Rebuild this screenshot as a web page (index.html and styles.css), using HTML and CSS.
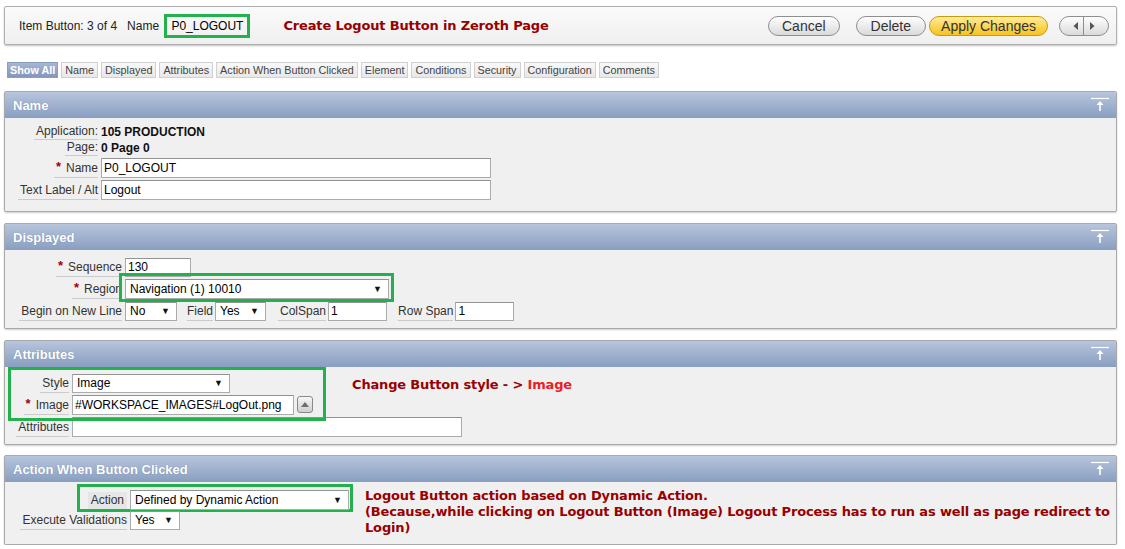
FILE: index.html
```html
<!DOCTYPE html>
<html>
<head>
<meta charset="utf-8">
<link rel="stylesheet" href="styles.css">
</head>
<body>
<div class="page">
  <div class="topbar">
    <div class="crumb">Item Button: 3 of 4 &nbsp; Name <span class="hl-name">P0_LOGOUT</span></div>
    <div class="note title-note">Create Logout Button in Zeroth Page</div>
    <div class="actions">
      <button class="pill p-cancel">Cancel</button>
      <button class="pill p-delete">Delete</button>
      <button class="pill hot">Apply Changes</button>
      <div class="pager">
        <span class="pg"><svg width="8" height="10" viewBox="0 0 8 10"><path d="M6 1L1.5 5L6 9Z" fill="#555"/></svg></span>
        <span class="pg"><svg width="8" height="10" viewBox="0 0 8 10"><path d="M2 1L6.5 5L2 9Z" fill="#555"/></svg></span>
      </div>
    </div>
  </div>

  <div class="tabs">
    <span class="tab on">Show All</span>
    <span class="tab">Name</span>
    <span class="tab">Displayed</span>
    <span class="tab">Attributes</span>
    <span class="tab">Action When Button Clicked</span>
    <span class="tab">Element</span>
    <span class="tab">Conditions</span>
    <span class="tab">Security</span>
    <span class="tab">Configuration</span>
    <span class="tab">Comments</span>
  </div>

  <section class="region r-name">
    <div class="rhead"><h2>Name</h2><svg class="up" width="18" height="14" viewBox="0 0 18 14"><path d="M0 1.5H18" stroke="#fff" stroke-width="1.2"/><path d="M9 6V14" stroke="#fff" stroke-width="1.6"/><path d="M5.5 8L9 4L12.5 8Z" fill="#fff"/></svg></div>
    <div class="rbody">
      <div class="form">
        <div class="row text"><div class="lab"><span>Application:</span></div><b class="val">105 PRODUCTION</b></div>
        <div class="row text"><div class="lab"><span>Page:</span></div><b class="val">0 Page 0</b></div>
        <div class="row"><div class="lab"><span><i class="req">*</i>Name</span></div><div class="inp w-name">P0_LOGOUT</div></div>
        <div class="row"><div class="lab"><span>Text Label / Alt</span></div><div class="inp w-name">Logout</div></div>
      </div>
    </div>
  </section>

  <section class="region r-disp">
    <div class="rhead"><h2>Displayed</h2><svg class="up" width="18" height="14" viewBox="0 0 18 14"><path d="M0 1.5H18" stroke="#fff" stroke-width="1.2"/><path d="M9 6V14" stroke="#fff" stroke-width="1.6"/><path d="M5.5 8L9 4L12.5 8Z" fill="#fff"/></svg></div>
    <div class="rbody">
      <div class="form">
        <div class="row"><div class="lab"><span><i class="req">*</i>Sequence</span></div><div class="inp w-seq">130</div></div>
        <div class="row"><div class="lab"><span><i class="req">*</i>Region</span></div><div class="hl-box hl-region"><div class="inp sel w-region">Navigation (1) 10010</div></div></div>
        <div class="row">
          <div class="lab"><span>Begin on New Line</span></div><div class="inp sel w-no">No</div>
          <span class="ilab l-field">Field</span><div class="inp sel w-yes">Yes</div>
          <span class="ilab l-col">ColSpan</span><div class="inp w-col">1</div>
          <span class="ilab l-row">Row Span</span><div class="inp w-col">1</div>
        </div>
      </div>
    </div>
  </section>

  <section class="region r-attr">
    <div class="rhead"><h2>Attributes</h2><svg class="up" width="18" height="14" viewBox="0 0 18 14"><path d="M0 1.5H18" stroke="#fff" stroke-width="1.2"/><path d="M9 6V14" stroke="#fff" stroke-width="1.6"/><path d="M5.5 8L9 4L12.5 8Z" fill="#fff"/></svg></div>
    <div class="rbody col">
      <div class="attr-top">
        <div class="form hl-box hl-attr">
          <div class="row"><div class="lab"><span>Style</span></div><div class="inp sel w-style">Image</div></div>
          <div class="row"><div class="lab"><span><i class="req">*</i>Image</span></div><div class="inp w-img">#WORKSPACE_IMAGES#LogOut.png</div><span class="pick"><svg width="10" height="7" viewBox="0 0 10 7"><path d="M1 6L5 1L9 6Z" fill="#6e6e6e"/></svg></span></div>
        </div>
        <div class="note attr-note">Change Button style - &gt; <span class="bright">Image</span></div>
      </div>
      <div class="form">
        <div class="row"><div class="lab"><span>Attributes</span></div><div class="inp w-attr"></div></div>
      </div>
    </div>
  </section>

  <section class="region r-act">
    <div class="rhead"><h2>Action When Button Clicked</h2><svg class="up" width="18" height="14" viewBox="0 0 18 14"><path d="M0 1.5H18" stroke="#fff" stroke-width="1.2"/><path d="M9 6V14" stroke="#fff" stroke-width="1.6"/><path d="M5.5 8L9 4L12.5 8Z" fill="#fff"/></svg></div>
    <div class="rbody">
      <div class="form">
        <div class="row hl-box hl-act"><div class="lab"><span class="boxed">Action</span></div><div class="inp sel w-act">Defined by Dynamic Action</div></div>
        <div class="row short"><div class="lab"><span>Execute Validations</span></div><div class="inp sel w-yes2">Yes</div></div>
      </div>
      <div class="note act-note">Logout Button action based on Dynamic Action.<br>(Because,while clicking on Logout Button (Image) Logout Process has to run as well as page redirect to<br>Login)</div>
    </div>
  </section>
</div>
</body>
</html>
```
FILE: styles.css
```css
* { box-sizing: border-box; }
body {
  margin: 0;
  background: #fff;
  font-family: "Liberation Sans", Arial, sans-serif;
  font-size: 12px;
  color: #222;
}
.page { padding: 6px 8px 0 4px; }

/* top bar */
.topbar {
  height: 39px;
  border: 1px solid #b0b0b0;
  border-radius: 2px;
  background: linear-gradient(#fbfbfb, #efefef);
  box-shadow: 0 1px 2px rgba(0,0,0,.25);
  display: flex;
  align-items: center;
  padding: 0 7px 0 14px;
}
.crumb { display: flex; align-items: center; white-space: pre; color: #222; }
.hl-name {
  border: 3px solid #22b14c;
  padding: 2px 4px;
  line-height: 14px;
  font-size: 12px;
  color: #000;
  margin-left: 2px;
}
.note {
  font-family: "DejaVu Sans", Verdana, sans-serif;
  font-weight: bold;
  font-size: 13px;
  letter-spacing: -0.16px;
  color: #990000;
  white-space: nowrap;
}
.title-note { margin-left: 33px; }
.actions { margin-left: auto; display: flex; align-items: center; }
.pill {
  height: 20px;
  border: 1px solid #8e8e8e;
  border-radius: 10px;
  background: linear-gradient(#fefefe, #dadada);
  font-family: "Liberation Sans", Arial, sans-serif;
  font-size: 14px;
  color: #333;
  padding: 0 13px;
  line-height: 18px;
}
.p-cancel { margin-right: 16px; padding: 0 13px 0 13px; }
.p-delete { margin-right: 3px; padding: 0 14px; }
.pill.hot {
  background: linear-gradient(#ffec9a, #f9c21e);
  border-color: #c79a10;
  padding: 0 11px;
  margin-right: 11px;
}
.pager {
  display: flex;
  height: 20px;
  border: 1px solid #8e8e8e;
  border-radius: 10px;
  background: linear-gradient(#fefefe, #dadada);
  overflow: hidden;
}
.pg { width: 24px; display: flex; align-items: center; justify-content: center; }
.pg:first-child { border-right: 1px solid #8e8e8e; justify-content: flex-end; padding-right: 3px; }
.pg:last-child { justify-content: flex-start; padding-left: 4px; }

/* tabs */
.tabs { display: flex; gap: 3px; margin: 17px 0 0 3px; }
.tab {
  height: 16px;
  line-height: 14px;
  padding: 0 3px;
  border: 1px solid #d0d0d0;
  background: linear-gradient(#f9f9f9, #e8e8e8);
  font-size: 10.8px;
  color: #444;
  white-space: nowrap;
}
.tab.on {
  background: linear-gradient(#a6b7d4, #8497bb);
  border-color: #8b9dc0;
  color: #fff;
  font-weight: bold;
  padding: 0 2px;
}

/* regions */
.region {
  margin-top: 11px;
  border: 1px solid #a9a9a9;
  border-radius: 2px;
  background: #f0f0f0;
  box-shadow: 0 1px 2px rgba(0,0,0,.2);
}
.r-name { margin-top: 13px; }
.r-act { margin-top: 10px; }
.rhead {
  height: 26px;
  background: linear-gradient(#b7c5dd, #899ec0);
  display: flex;
  align-items: center;
  justify-content: space-between;
  padding: 0 7px 0 8px;
}
.rhead h2 {
  margin: 0;
  font-size: 13px;
  font-weight: bold;
  color: #fff;
  text-shadow: 0 0 1px rgba(60,80,120,.5);
}
.up { margin-top: -2px; }
.rbody { display: flex; }
.rbody.col { flex-direction: column; }
.form { display: flex; flex-direction: column; }

.r-name .rbody { padding: 6px 0 11px; }
.r-disp .rbody { padding: 5px 0 7px; }
.r-attr .rbody { padding: 4px 0 7px; }
.r-act .rbody { padding: 6px 0 8px; }

.row { display: flex; align-items: flex-end; height: 22px; }
.row.text { height: 16px; }
.row.short { height: 20px; }
.lab { flex: none; text-align: right; margin-right: 3px; }
.lab span {
  display: inline-block;
  line-height: 17px;
  border-bottom: 1px solid #cbcbcb;
  color: #333;
  padding-left: 2px;
}
.row.text .lab span { line-height: 15px; }
.r-name .lab { width: 93px; }
.r-disp .lab { width: 117px; }
.r-attr .lab { width: 64px; }
.r-act .lab { width: 122px; }
.lab span.boxed { background: #e6e6e6; padding: 0 3px; }

.val { line-height: 15px; color: #111; }
.req {
  font-style: normal;
  font-weight: bold;
  color: #a10000;
  font-size: 13px;
  margin-right: 5px;
  vertical-align: 1px;
}

.inp {
  height: 20px;
  border: 1px solid #ababab;
  border-top-color: #929292;
  background: #fff;
  font-size: 12px;
  line-height: 18px;
  padding: 0 2px;
  color: #000;
  white-space: nowrap;
}
.sel { position: relative; padding-left: 4px; }
.sel::after {
  content: "\25BC";
  position: absolute;
  right: 6px;
  top: 0;
  font-size: 9px;
  color: #111;
}
.w-name { width: 390px; }
.w-seq { width: 66px; height: 19px; line-height: 17px; }
.w-region { width: 264px; }
.w-no { width: 52px; height: 19px; line-height: 17px; }
.w-yes { width: 51px; height: 19px; line-height: 17px; }
.w-col { width: 59px; height: 19px; line-height: 17px; }
.w-style { width: 158px; height: 19px; line-height: 17px; }
.w-img { width: 222px; }
.w-attr { width: 390px; }
.w-act { width: 219px; }
.w-yes2 { width: 50px; height: 19px; line-height: 17px; }

.ilab {
  line-height: 17px;
  border-bottom: 1px solid #cbcbcb;
  color: #333;
  margin-right: 2px;
}
.l-field { margin-left: 10px; }
.l-col { margin-left: 12px; padding-left: 2px; }
.l-row { margin-left: 11px; }

.pick {
  width: 16px;
  height: 17px;
  margin: 0 0 2px 3px;
  border: 1px solid #8a8a8a;
  border-radius: 3px;
  background: linear-gradient(#f6f6f6, #cfcfcf);
  display: flex;
  align-items: center;
  justify-content: center;
}

/* annotation highlight boxes */
.hl-box { position: relative; }
.hl-box::before {
  content: "";
  position: absolute;
  border: 3px solid #22b14c;
  pointer-events: none;
}
.hl-region::before { left: -6px; right: -5px; top: -6px; bottom: -3px; }
.hl-attr::before { left: 3px; right: -13px; top: -4px; bottom: -6px; }
.hl-act::before { left: 72px; right: -4px; top: -4px; bottom: -2px; }

.attr-top { display: flex; }
.attr-note { margin-left: 39px; padding-top: 6px; line-height: 16px; }
.bright { color: #ee1c24; }
.act-note { margin-left: 16px; line-height: 16px; margin-top: 0; }
```
